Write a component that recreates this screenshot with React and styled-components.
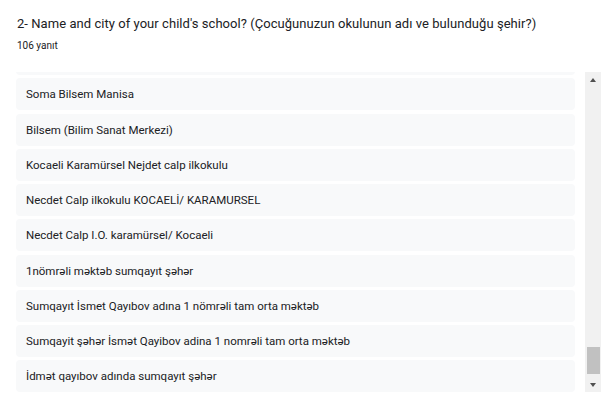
import React, { useLayoutEffect, useRef } from "react";
import styled, { createGlobalStyle } from "styled-components";

const GlobalStyle = createGlobalStyle`
  html, body {
    margin: 0;
    padding: 0;
    background: #ffffff;
  }
  body {
    font-family: Roboto, "Noto Sans", Arial, sans-serif;
    color: #202124;
  }
`;

const Page = styled.div`
  width: 611px;
  height: 410px;
  overflow: hidden;
  display: flex;
  flex-direction: column;
`;

const Header = styled.div`
  padding: 15px 0 0 17px;
  height: 72px;
  box-sizing: border-box;
`;

const Title = styled.div`
  font-size: 13px;
  line-height: 17px;
  color: #202124;
  letter-spacing: 0.05px;
`;

const Count = styled.div`
  margin-top: 8px;
  font-size: 10px;
  line-height: 12px;
  color: #202124;
`;

const ListArea = styled.div`
  display: flex;
  flex-direction: row;
  height: 320px;
  padding-left: 16px;
`;

// only the bottom of the answer list is on screen
const Viewport = styled.div`
  width: 559px;
  height: 320px;
  overflow: hidden;
`;

const Card = styled.div`
  height: 32px;
  margin-bottom: 3.25px;
  background: #f8f9fa;
  border-radius: 4px;
  display: flex;
  align-items: center;
  padding-left: 10px;
  font-size: 11.5px;
  color: #202124;
  white-space: nowrap;

  &:last-child {
    margin-bottom: 0;
  }
`;

const Scrollbar = styled.div`
  margin-left: 10px;
  width: 16px;
  height: 320px;
  background: #f1f1f1;
  display: flex;
  flex-direction: column;
`;

const ArrowButton = styled.div`
  height: 15px;
  display: flex;
  align-items: center;
  justify-content: center;
`;

const Arrow = styled.div`
  width: 0;
  height: 0;
  border-left: 3.5px solid transparent;
  border-right: 3.5px solid transparent;
  ${(p) =>
    p.down
      ? "border-top: 4px solid #505050;"
      : "border-bottom: 4px solid #505050;"}
`;

const Track = styled.div`
  flex: 1;
  display: flex;
  flex-direction: column;
  justify-content: flex-end;
  align-items: center;
  padding-bottom: 3px;
`;

const Thumb = styled.div`
  width: 13px;
  height: 27px;
  background: #c1c1c1;
`;

const answers = [
  "",
  "Soma Bilsem Manisa",
  "Bilsem (Bilim Sanat Merkezi)",
  "Kocaeli Karamürsel Nejdet calp ilkokulu",
  "Necdet Calp ilkokulu KOCAELİ/ KARAMURSEL",
  "Necdet Calp I.O. karamürsel/ Kocaeli",
  "1nömrəli məktəb sumqayıt şəhər",
  "Sumqayıt İsmet Qayıbov adına 1 nömrəli tam orta məktəb",
  "Sumqayit şəhər İsmət Qayibov adina 1 nomrəli tam orta məktəb",
  "İdmət qayıbov adında sumqayıt şəhər",
];

export default function App() {
  const viewRef = useRef(null);

  useLayoutEffect(() => {
    const el = viewRef.current;
    if (el) el.scrollTop = el.scrollHeight - el.clientHeight;
  }, []);

  return (
    <Page>
      <GlobalStyle />
      <Header>
        <Title>
          2- Name and city of your child's school? (Çocuğunuzun okulunun adı ve
          bulunduğu şehir?)
        </Title>
        <Count>106 yanıt</Count>
      </Header>
      <ListArea>
        <Viewport ref={viewRef}>
          {answers.map((a, i) => (
            <Card key={i}>{a}</Card>
          ))}
        </Viewport>
        <Scrollbar>
          <ArrowButton>
            <Arrow />
          </ArrowButton>
          <Track>
            <Thumb />
          </Track>
          <ArrowButton>
            <Arrow down />
          </ArrowButton>
        </Scrollbar>
      </ListArea>
    </Page>
  );
}
